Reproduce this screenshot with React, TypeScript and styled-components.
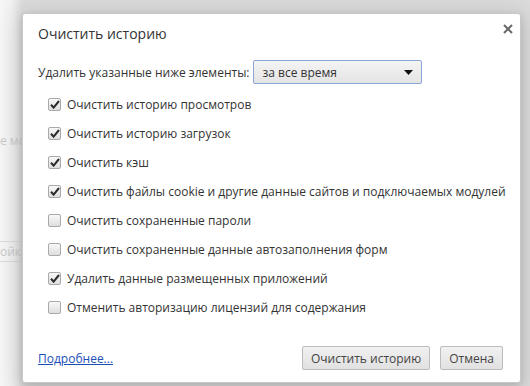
import React from 'react'
import styled, { createGlobalStyle } from 'styled-components'

const GlobalStyle = createGlobalStyle`
    html, body {
        margin: 0;
        padding: 0;
        width: 530px;
        height: 386px;
        overflow: hidden;
        background: #f7f7f7;
    }
    body {
        font-family: "Open Sans", "Liberation Sans", sans-serif;
        font-size: 12px;
        color: #333;
    }
`

// page under the overlay, only a sliver shows left of the dialog
const Page = styled.div`
    position: relative;
    width: 530px;
    height: 386px;
    overflow: hidden;
    background: linear-gradient(to right, #f7f7f7 0px, #f0f0f0 12px, #dcdcdc 22px);
`

const GhostText = styled.div`
    padding: 132px 0 0 0;
    color: #cacaca;
    font-size: 12px;
    white-space: nowrap;
`

const GhostButton = styled.div`
    margin-top: 92px;
    width: 21px;
    height: 19px;
    border: 1px solid #dadada;
    border-left: 0;
    color: #cacaca;
    line-height: 19px;
    white-space: nowrap;
`

const Dialog = styled.div`
    position: absolute;
    left: 22px;
    top: 13px;
    width: 497px;
    height: 368px;
    background: #fff;
    border: 1px solid #c8c8c8;
    border-radius: 3px;
    box-shadow: 0 4px 23px 5px rgba(0, 0, 0, 0.12), 0 2px 6px rgba(0, 0, 0, 0.12);
    display: flex;
    flex-direction: column;
`

const Header = styled.div`
    padding: 10px 16px 0 15px;
    height: 20px;
    font-size: 14px;
    line-height: 20px;
    color: #333;
`

const Close = styled.div`
    position: absolute;
    right: 6px;
    top: 8px;
    width: 12px;
    height: 12px;
`

const Body = styled.div`
    padding: 16px 16px 0 15px;
    display: flex;
    flex-direction: column;
`

const RangeRow = styled.div`
    display: flex;
    align-items: center;
    gap: 3px;
    height: 24px;
`

const Select = styled.div`
    box-sizing: border-box;
    width: 169px;
    height: 24px;
    border: 1px solid #8aa6d8;
    border-radius: 2px;
    background: linear-gradient(#f4f4f4, #e4e4e4);
    display: flex;
    align-items: center;
    justify-content: space-between;
    padding: 0 8px 0 9px;
    color: #333;
`

const List = styled.div`
    margin-top: 6px;
    display: flex;
    flex-direction: column;
`

const Row = styled.label`
    display: flex;
    align-items: center;
    gap: 6px;
    height: 29px;
    padding-left: 10px;
    white-space: nowrap;
`

const Box = styled.span<{ $checked: boolean }>`
    box-sizing: border-box;
    width: 13px;
    height: 13px;
    border: 1px solid #a9a9a9;
    border-radius: 2px;
    background: linear-gradient(#f8f8f8, #dedede);
    display: flex;
    align-items: center;
    justify-content: center;
    flex-shrink: 0;
`

const Footer = styled.div`
    margin-top: auto;
    padding: 0 17px 12px 15px;
    display: flex;
    align-items: center;
    gap: 10px;
`

const Link = styled.a`
    color: #1a4fb5;
    text-decoration: underline;
    margin-right: auto;
    cursor: pointer;
`

const Button = styled.button`
    box-sizing: border-box;
    height: 24px;
    padding: 0 8px;
    border: 1px solid #bcbcbc;
    border-radius: 2px;
    background: linear-gradient(#f1f1f1, #e1e1e1);
    font-family: inherit;
    font-size: 12px;
    color: #444;
`

const items = [
    { label: 'Очистить историю просмотров', checked: true },
    { label: 'Очистить историю загрузок', checked: true },
    { label: 'Очистить кэш', checked: true },
    { label: 'Очистить файлы cookie и другие данные сайтов и подключаемых модулей', checked: true },
    { label: 'Очистить сохраненные пароли', checked: false },
    { label: 'Очистить сохраненные данные автозаполнения форм', checked: false },
    { label: 'Удалить данные размещенных приложений', checked: true },
    { label: 'Отменить авторизацию лицензий для содержания', checked: false },
]

const Check = () => (
    <svg width="10" height="9" viewBox="0 0 10 9">
        <path d="M1 4.8 L3.6 7.6 L9 1" fill="none" stroke="#2a2a2a" strokeWidth="2" />
    </svg>
)

export default function App() {
    return <>
        <GlobalStyle />
        <Page>
            <GhostText>е мо</GhostText>
            <GhostButton>ойк</GhostButton>
            <Dialog>
                <Header>Очистить историю</Header>
                <Close>
                    <svg width="12" height="12" viewBox="0 0 12 12">
                        <path d="M2 2 L10 10 M10 2 L2 10" stroke="#6a6a6a" strokeWidth="2" />
                    </svg>
                </Close>
                <Body>
                    <RangeRow>
                        <span>Удалить указанные ниже элементы:</span>
                        <Select>
                            <span>за все время</span>
                            <svg width="9" height="5" viewBox="0 0 9 5"><path d="M0 0 H9 L4.5 5 Z" fill="#111" /></svg>
                        </Select>
                    </RangeRow>
                    <List>
                        {items.map((item, i) => (
                            <Row key={i}>
                                <Box $checked={item.checked}>{item.checked && <Check />}</Box>
                                <span>{item.label}</span>
                            </Row>
                        ))}
                    </List>
                </Body>
                <Footer>
                    <Link>Подробнее...</Link>
                    <Button>Очистить историю</Button>
                    <Button>Отмена</Button>
                </Footer>
            </Dialog>
        </Page>
    </>
}
